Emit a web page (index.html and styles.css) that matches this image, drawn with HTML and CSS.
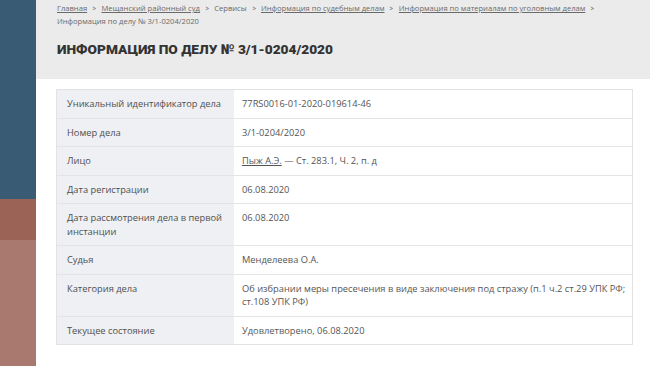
FILE: index.html
```html
<!DOCTYPE html>
<html lang="ru">
<head>
<meta charset="utf-8">
<link rel="stylesheet" href="styles.css">
</head>
<body>
<div class="page">
  <aside class="side">
    <div class="side-blue"></div>
    <div class="side-brown"></div>
    <div class="side-rose"></div>
  </aside>
  <main class="main">
    <header class="head">
      <nav class="crumbs">
        <a href="#">Главная</a><span class="sep">&gt;</span><a href="#">Мещанский районный суд</a><span class="sep">&gt;</span><span>Сервисы</span><span class="sep">&gt;</span><a href="#">Информация по судебным делам</a><span class="sep">&gt;</span><a href="#">Информация по материалам по уголовным делам</a><span class="sep">&gt;</span><br><span>Информация по делу № 3/1-0204/2020</span>
      </nav>
      <h1 class="title">Информация по делу № 3/1-0204/2020</h1>
    </header>
    <section class="content">
      <div class="info">
        <div class="lbl">Уникальный идентификатор дела</div><div class="val">77RS0016-01-2020-019614-46</div>
        <div class="lbl">Номер дела</div><div class="val">3/1-0204/2020</div>
        <div class="lbl">Лицо</div><div class="val"><a href="#">Пыж А.Э.</a> — Ст. 283.1, Ч. 2, п. д</div>
        <div class="lbl">Дата регистрации</div><div class="val">06.08.2020</div>
        <div class="lbl">Дата рассмотрения дела в первой инстанции</div><div class="val">06.08.2020</div>
        <div class="lbl">Судья</div><div class="val">Менделеева О.А.</div>
        <div class="lbl">Категория дела</div><div class="val">Об избрании меры пресечения в виде заключения под стражу (п.1 ч.2 ст.29 УПК РФ; ст.108 УПК РФ)</div>
        <div class="lbl last">Текущее состояние</div><div class="val last">Удовлетворено, 06.08.2020</div>
      </div>
    </section>
  </main>
</div>
</body>
</html>
```

FILE: styles.css
```css
* { box-sizing: border-box; }
html, body { margin: 0; padding: 0; }
body {
  width: 650px;
  height: 366px;
  overflow: hidden;
  background: #fff;
  font-family: "Open Sans", "Liberation Sans", sans-serif;
  color: #555;
}
.page {
  display: flex;
  height: 366px;
}
.side {
  width: 36px;
  flex: none;
  display: flex;
  flex-direction: column;
}
.side-blue { height: 199px; background: #3a5b74; }
.side-brown { height: 41px; background: #9a6356; }
.side-rose { flex: 1; background: #a9796f; }
.main {
  flex: 1;
  display: flex;
  flex-direction: column;
}
.head {
  background: #ebebeb;
  height: 79px;
  padding: 2px 0 0 21px;
}
.crumbs {
  font-size: 7.6px;
  line-height: 13px;
  color: #6a6a6a;
}
.crumbs a { color: #6a6a6a; text-decoration: underline; }
.crumbs .sep {
  display: inline-block;
  margin: 0 5px;
  font-weight: 700;
  transform: scaleX(0.8);
  color: #777;
}
.title {
  margin: 12px 0 0;
  font-family: Roboto, "Open Sans", sans-serif;
  font-weight: 900;
  font-size: 13.7px;
  line-height: 18px;
  letter-spacing: 0;
  text-transform: uppercase;
  color: #333;
}
.content {
  padding: 10px 17px 0 20px;
}
.info {
  display: grid;
  grid-template-columns: 177px 1fr;
  border: 1px solid #e2e2e2;
  font-size: 9.3px;
  line-height: 13.5px;
}
.lbl, .val {
  padding-top: 7px;
  padding-bottom: 7px;
  border-bottom: 1px solid #e4e4e4;
}
.lbl {
  padding-left: 10px;
  padding-right: 6px;
  background: #eef0f3;
  color: #4f4f4f;
}
.val {
  padding-left: 8px;
  padding-right: 2px;
  color: #555;
}
.lbl.last, .val.last { border-bottom: none; }
.val a { color: #555; text-decoration: underline; }
```
